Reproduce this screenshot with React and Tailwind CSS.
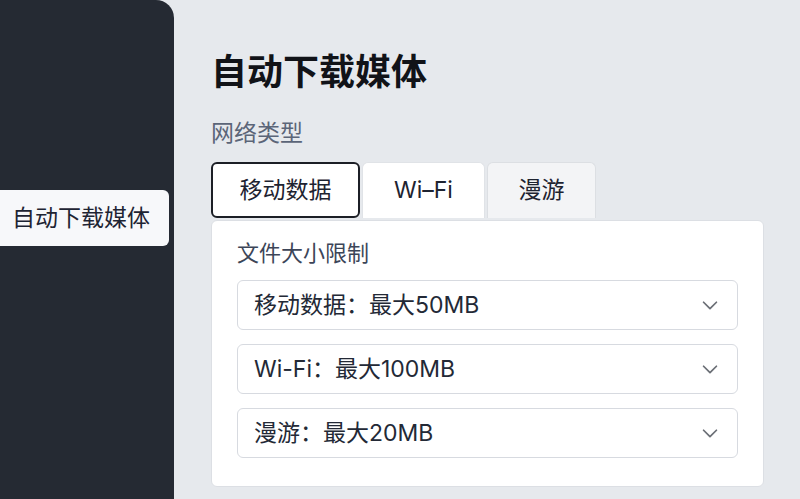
import React from 'react';

const limits = ['移动数据：最大50MB', 'Wi-Fi：最大100MB', '漫游：最大20MB'];

const Chevron = () => (
  <svg width="22" height="22" viewBox="0 0 24 24" fill="none" stroke="#6b6f76" strokeWidth="1.9" strokeLinecap="round" strokeLinejoin="round">
    <path d="M5 9l7 7 7-7" />
  </svg>
);

export default function App() {
  return (
    <div className="flex w-[800px] h-[499px] overflow-hidden bg-[#e6e9ed] font-['Inter','Noto_Sans_CJK_SC',sans-serif]">
      <aside className="w-[174px] shrink-0 h-full bg-[#252a33] rounded-tr-[18px] pt-[190px]">
        <div className="w-[169px] h-[56px] bg-[#f7f8fa] rounded-r-md flex items-center pl-[12px] text-[23px] text-[#1e2433]">
          自动下载媒体
        </div>
      </aside>

      <main className="flex-1 pl-[37px] pt-[50px]">
        <h1 className="text-[36px] leading-[44px] font-bold text-[#111318]">自动下载媒体</h1>
        <p className="mt-[24px] text-[23px] leading-[30px] text-[#5b6578]">网络类型</p>

        <div className="mt-[14px] flex gap-[2px] items-end">
          <button className="w-[149px] h-[56px] rounded-md border-2 border-[#1c1f26] bg-white text-[23px] text-[#1e2330]">
            移动数据
          </button>
          <button className="w-[123px] h-[56px] rounded-t-md border border-b-0 border-[#e0e3e7] bg-white text-[23px] text-[#1e2330]">
            Wi–Fi
          </button>
          <button className="w-[109px] h-[56px] rounded-t-md border border-b-0 border-[#dcdfe3] bg-[#f3f4f6] text-[23px] text-[#1e2330]">
            漫游
          </button>
        </div>

        <section className="mt-[2px] w-[553px] bg-white rounded-md border border-[#dcdfe4] px-[25px] pt-[17px] pb-[28px]">
          <p className="text-[22px] leading-[30px] text-[#3c4558]">文件大小限制</p>
          <div className="mt-[12px] flex flex-col gap-[14px]">
            {limits.map((item) => (
              <div
                key={item}
                className="h-[50px] rounded-md border border-[#d7dae0] bg-white flex items-center justify-between pl-[16px] pr-[16px]"
              >
                <span className="text-[23px] text-[#232936]">{item}</span>
                <Chevron />
              </div>
            ))}
          </div>
        </section>
      </main>
    </div>
  );
}
